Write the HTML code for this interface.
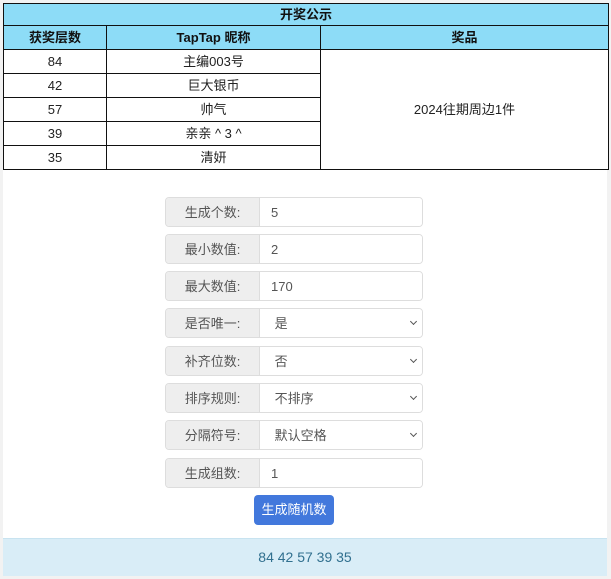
<!DOCTYPE html>
<html><head><meta charset="utf-8"><style>
*{box-sizing:border-box;margin:0;padding:0}
body{width:611px;height:579px;background:#f2f2f2;font-family:"Liberation Sans","Noto Sans CJK SC",sans-serif;position:relative;overflow:hidden;color:#222}
.main{position:absolute;left:3px;top:3px;width:604px;height:573px;background:#fff}
table{position:absolute;left:3px;top:3px;width:606px;border-collapse:collapse;font-size:13px}
td,th{border:1px solid #111;text-align:center;height:24px;padding:0;line-height:1}
th{background:#8ddcf7;font-weight:bold;color:#111}
.g{position:absolute;left:165px;width:258px;height:30px;border:1px solid #ddd;border-radius:4px;display:flex;font-size:13px;color:#555;overflow:hidden;line-height:1}
.g .l{width:94px;background:#eee;border-right:1px solid #ddd;text-align:center;padding-top:8px}
.g .v{flex:1;background:#fff;padding-left:11px;padding-top:8px;position:relative;color:#555}
.ch{position:absolute;right:6px;top:10px;width:5px;height:5px;border-right:1.3px solid #555;border-bottom:1.3px solid #555;transform:rotate(45deg)}
.btn{position:absolute;left:254px;top:495px;width:80px;height:30px;background:#4278dc;border-radius:4px;color:#fff;font-size:13px;line-height:1;text-align:center;padding-top:8px}
.res{position:absolute;left:3px;top:538px;width:604px;height:38px;background:#d9edf7;border-top:1px solid #c8e3f0;color:#31708f;font-size:14px;line-height:1;text-align:center;padding-top:11px}
</style></head><body>
<div class="main"></div>
<table>
<tr><th colspan="3" style="height:22px">开奖公示</th></tr>
<tr><th style="width:103px">获奖层数</th><th style="width:214px">TapTap 昵称</th><th>奖品</th></tr>
<tr><td>84</td><td>主编003号</td><td rowspan="5" style="background:#fff">2024往期周边1件</td></tr>
<tr><td>42</td><td>巨大银币</td></tr>
<tr><td>57</td><td>帅气</td></tr>
<tr><td>39</td><td>亲亲 ^ 3 ^</td></tr>
<tr><td>35</td><td>清妍</td></tr>
</table>
<div class="g" style="top:197px"><div class="l">生成个数:</div><div class="v">5</div></div>
<div class="g" style="top:234px"><div class="l">最小数值:</div><div class="v">2</div></div>
<div class="g" style="top:271px"><div class="l">最大数值:</div><div class="v">170</div></div>
<div class="g" style="top:308px"><div class="l">是否唯一:</div><div class="v">&nbsp;是<span class="ch"></span></div></div>
<div class="g" style="top:346px"><div class="l">补齐位数:</div><div class="v">&nbsp;否<span class="ch"></span></div></div>
<div class="g" style="top:383px"><div class="l">排序规则:</div><div class="v">&nbsp;不排序<span class="ch"></span></div></div>
<div class="g" style="top:420px"><div class="l">分隔符号:</div><div class="v">&nbsp;默认空格<span class="ch"></span></div></div>
<div class="g" style="top:458px"><div class="l">生成组数:</div><div class="v">1</div></div>
<div class="btn">生成随机数</div>
<div class="res">84 42 57 39 35</div>
</body></html>
